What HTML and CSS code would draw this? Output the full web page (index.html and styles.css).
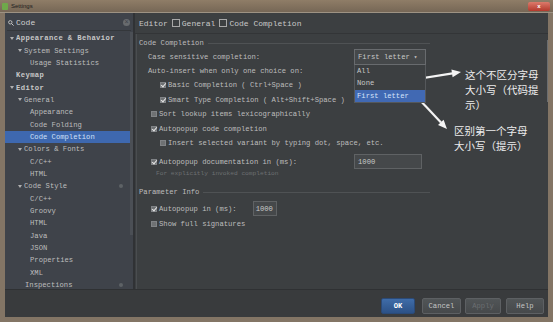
FILE: index.html
```html
<!DOCTYPE html>
<html lang="zh-cn">
<head>
<meta charset="UTF-8">
<title>Settings</title>
<link rel="stylesheet" href="styles.css">
</head>
<body>
<div class="window">
    <div class="titlebar">
        <span class="app-icon"></span>
        <span class="title">Settings</span>
        <span class="close">x</span>
    </div>

    <div class="dialog">
        <div class="main">
            <!-- arvore da esquerda -->
            <div class="sidebar">
                <div class="search">
                    <svg class="lupa" width="6" height="6" viewBox="0 0 6 6"><circle cx="2.3" cy="2.3" r="1.7" fill="none" stroke="#c8c8c8" stroke-width="0.9"/><line x1="3.5" y1="3.5" x2="5.6" y2="5.6" stroke="#c8c8c8" stroke-width="1"/></svg>
                    <span class="query">Code</span>
                    <span class="clear">×</span>
                </div>
                <ul class="tree">
                    <li class="l0 bold"><i class="arr"></i>Appearance &amp; Behavior</li>
                    <li class="l1"><i class="arr"></i>System Settings</li>
                    <li class="l2">Usage Statistics</li>
                    <li class="l0 leaf bold">Keymap</li>
                    <li class="l0 bold"><i class="arr"></i>Editor</li>
                    <li class="l1"><i class="arr"></i>General</li>
                    <li class="l2">Appearance</li>
                    <li class="l2">Code Folding</li>
                    <li class="l2 selected">Code Completion</li>
                    <li class="l1"><i class="arr"></i>Colors &amp; Fonts</li>
                    <li class="l2">C/C++</li>
                    <li class="l2">HTML</li>
                    <li class="l1"><i class="arr"></i>Code Style<span class="proj"></span></li>
                    <li class="l2">C/C++</li>
                    <li class="l2">Groovy</li>
                    <li class="l2">HTML</li>
                    <li class="l2">Java</li>
                    <li class="l2">JSON</li>
                    <li class="l2">Properties</li>
                    <li class="l2">XML</li>
                    <li class="l1 leaf">Inspections<span class="proj"></span></li>
                </ul>
                <div class="side-thumb"></div>
            </div>

            <!-- painel da direita -->
            <div class="content">
                <div class="crumbs">Editor<span class="box"></span>General<span class="box"></span>Code Completion</div>
                <div class="panel">
                    <div class="sec">Code Completion</div>

                    <div class="row grid">
                        <span class="lbl">Case sensitive completion:</span>
                        <div class="combo">First letter <span class="caret">▾</span>
                            <ul class="popup">
                                <li>All</li>
                                <li>None</li>
                                <li class="on">First letter</li>
                            </ul>
                        </div>
                    </div>
                    <div class="row"><span class="lbl">Auto-insert when only one choice on:</span></div>
                    <div class="row sub"><span class="cb checked"></span>Basic Completion ( Ctrl+Space )</div>
                    <div class="row sub"><span class="cb checked"></span>Smart Type Completion ( Alt+Shift+Space )</div>
                    <div class="row opt"><span class="cb"></span>Sort lookup items lexicographically</div>
                    <div class="row opt"><span class="cb checked"></span>Autopopup code completion</div>
                    <div class="row sub"><span class="cb"></span>Insert selected variant by typing dot, space, etc.</div>

                    <div class="row grid doc">
                        <span class="opt-in"><span class="cb checked"></span>Autopopup documentation in (ms):</span>
                        <span class="field wide">1000</span>
                    </div>
                    <div class="hint">For explicitly invoked completion</div>

                    <div class="sec param">Parameter Info</div>
                    <div class="row opt tall"><span class="cb checked"></span>Autopopup in (ms):<span class="field small">1000</span></div>
                    <div class="row opt"><span class="cb"></span>Show full signatures</div>
                </div>
                <div class="vscroll"></div>
            </div>
        </div>

        <div class="footer">
            <button class="btn ok">OK</button>
            <button class="btn cancel">Cancel</button>
            <button class="btn apply">Apply</button>
            <button class="btn help">Help</button>
        </div>
    </div>

    <!-- anotacoes por cima da tela -->
    <svg class="arrows" width="553" height="322" viewBox="0 0 553 322">
        <line x1="392" y1="83" x2="452.5" y2="73.4" stroke="#f4f4f4" stroke-width="2.2"/>
        <polygon points="461,72 452.6,77.2 451.4,69.6" fill="#f4f4f4"/>
        <line x1="417" y1="97" x2="441" y2="122.4" stroke="#f4f4f4" stroke-width="2.2"/>
        <polygon points="447,129 438,125 443.6,119.8" fill="#f4f4f4"/>
    </svg>
    <div class="note n1">这个不区分字母<br>大小写（代码提<br>示）</div>
    <div class="note n2">区别第一个字母<br>大小写（提示）</div>
</div>
</body>
</html>
```

FILE: styles.css
```css
/* base */
* {
    box-sizing: border-box;
    margin: 0;
    padding: 0;
}

body {
    width: 553px;
    height: 322px;
    overflow: hidden;
    background-color: #837565;
    font-family: "Liberation Mono", "DejaVu Sans Mono", monospace;
    font-size: 7.2px;
    color: #bdbdbd;
}

.window {
    height: 322px;
    display: flex;
    flex-direction: column;
    position: relative;
}

/* barra de titulo */
.titlebar {
    height: 13px;
    display: flex;
    align-items: center;
    padding: 0 3px 0 2px;
    background: linear-gradient(#8f7d67, #766756);
    border-bottom: 1px solid #9d9283;
}

.app-icon {
    width: 6px;
    height: 7px;
    background-color: #6fa84a;
    border-radius: 1px;
    margin-right: 3px;
}

.title {
    font-family: "Liberation Sans", sans-serif;
    font-size: 6px;
    color: #1d1d1d;
}

.close {
    margin-left: auto;
    width: 22px;
    height: 9px;
    line-height: 8px;
    text-align: center;
    font-family: "Liberation Sans", sans-serif;
    font-size: 6px;
    font-weight: bold;
    color: #fff;
    background: linear-gradient(#dc7a6b, #b3392c);
    border-radius: 2px;
}

/* dialogo */
.dialog {
    flex: 1;
    margin: 0 5px 5px 5px;
    display: flex;
    flex-direction: column;
    background-color: #3c3f41;
    min-height: 0;
}

.main {
    flex: 1;
    display: flex;
    min-height: 0;
}

/* arvore */
.sidebar {
    width: 130px;
    flex: none;
    background-color: #3f434a;
    border-right: 2px solid #303235;
    position: relative;
    overflow: hidden;
}

.search {
    height: 16px;
    margin: 2px 2px 0 2px;
    display: flex;
    align-items: center;
    padding-left: 1px;
    border-bottom: 1px solid #34373b;
}

.lupa {
    margin-right: 2px;
}

.query {
    font-size: 8px;
    color: #d0d0d0;
}

.clear {
    margin-left: auto;
    margin-right: 1px;
    width: 7px;
    height: 7px;
    border-radius: 50%;
    background-color: #686b6e;
    color: #3f434a;
    font-size: 7px;
    line-height: 7px;
    text-align: center;
}

.tree {
    list-style: none;
    padding-top: 1px;
}

.tree li {
    height: 12.35px;
    display: flex;
    align-items: center;
    white-space: nowrap;
}

.tree .bold {
    font-weight: bold;
    letter-spacing: 0.4px;
    color: #c8c8c8;
}

.tree .l0 { padding-left: 5px; }
.tree .l0.leaf { padding-left: 11px; }
.tree .l1 { padding-left: 13px; }
.tree .l1.leaf { padding-left: 20px; }
.tree .l2 { padding-left: 25px; }

.arr {
    width: 6px;
    height: 4px;
    flex: none;
    position: relative;
}

.arr::before {
    content: "";
    position: absolute;
    left: 0;
    top: 0.5px;
    border-left: 2.2px solid transparent;
    border-right: 2.2px solid transparent;
    border-top: 3px solid #b0b0b0;
}

.tree .selected {
    background-color: #3e68af;
    color: #cfe0f8;
}

.proj {
    margin-left: auto;
    margin-right: 10px;
    width: 4px;
    height: 4px;
    border-radius: 50%;
    background-color: #5e6266;
}

.side-thumb {
    position: absolute;
    right: 0;
    top: 19px;
    width: 3px;
    height: 203px;
    background-color: #4b4f55;
}

/* painel */
.content {
    flex: 1;
    display: flex;
    flex-direction: column;
    position: relative;
}

.crumbs {
    height: 21px;
    display: flex;
    align-items: center;
    padding-left: 4px;
    font-size: 8px;
    color: #c8c8c8;
    border-bottom: 1px solid #333537;
}

.box {
    width: 8px;
    height: 8px;
    margin: 0 2px 0 4px;
    border: 1px solid #a8a8a8;
}

.panel {
    flex: 1;
    margin-left: 1px;
    border-left: 1px solid #4a4d50;
    padding-top: 3px;
}

.sec {
    height: 12px;
    display: flex;
    align-items: center;
    padding-left: 2px;
    margin-right: 118px;
}

.sec::after {
    content: "";
    flex: 1;
    height: 1px;
    margin-left: 4px;
    background-color: #4f5254;
}

.sec.param {
    height: 14px;
    margin-top: 6px;
}

.row {
    height: 14.5px;
    display: flex;
    align-items: center;
    white-space: nowrap;
}

.row.grid {
    display: grid;
    grid-template-columns: 217px auto;
    justify-items: start;
}

.row.tall {
    height: 15px;
    margin-top: 2px;
    margin-bottom: 1px;
}

.lbl { padding-left: 11px; }
.opt { padding-left: 14px; }
.sub { padding-left: 23px; }

.opt-in {
    padding-left: 14px;
    display: flex;
    align-items: center;
}

.doc {
    height: 15px;
    margin-top: 3.5px;
}

.hint {
    height: 10px;
    line-height: 10px;
    padding-left: 19px;
    font-size: 6.2px;
    color: #6d7072;
}

/* checkbox */
.cb {
    width: 6px;
    height: 6px;
    margin-right: 2px;
    flex: none;
    background-color: #6e7173;
    border: 1px solid #808386;
    position: relative;
}

.cb.checked::after {
    content: "";
    position: absolute;
    left: 0.5px;
    top: -1px;
    width: 2px;
    height: 4px;
    border-right: 1.3px solid #e6e6e6;
    border-bottom: 1.3px solid #e6e6e6;
    transform: rotate(40deg);
}

/* combo e campos */
.combo {
    width: 72px;
    height: 16px;
    display: flex;
    align-items: center;
    padding-left: 3px;
    background-color: #45484a;
    border: 1px solid #686b6e;
    color: #c8c8c8;
    position: relative;
}

.caret {
    margin-left: 4px;
    font-size: 6px;
}

.popup {
    list-style: none;
    position: absolute;
    left: -1px;
    top: 15px;
    width: 72px;
    background-color: #3c3f41;
    border: 1px solid #55585b;
    border-top: none;
    z-index: 2;
}

.popup li {
    height: 12.4px;
    line-height: 12.4px;
    padding-left: 2px;
}

.popup li.on {
    background-color: #4169b3;
    color: #d6e4fb;
}

.field {
    height: 15px;
    display: flex;
    align-items: center;
    padding-left: 3px;
    background-color: #45484a;
    border: 1px solid #5f6264;
    color: #c8c8c8;
}

.field.wide { width: 68px; }

.field.small {
    width: 24px;
    margin-left: 16px;
    padding-left: 2px;
}

.vscroll {
    position: absolute;
    right: 0;
    top: 27px;
    width: 1px;
    height: 62px;
    background-color: #6a6d70;
}

/* rodape */
.footer {
    height: 28px;
    flex: none;
    display: flex;
    justify-content: flex-end;
    align-items: flex-start;
    padding: 8px 4px 0 0;
    background-color: #393b3d;
    border-top: 1px solid #2f3133;
}

.btn {
    height: 16px;
    font-family: "Liberation Mono", "DejaVu Sans Mono", monospace;
    font-size: 7.2px;
    color: #c4c4c4;
    background: linear-gradient(#515557, #46494b);
    border: 1px solid #5d6063;
    border-radius: 2px;
}

.btn.ok {
    width: 34px;
    color: #ffffff;
    font-weight: bold;
    background: linear-gradient(#3f6ca8, #2c5186);
    border-color: #2b4a77;
}

.btn.cancel { width: 39px; margin-left: 7px; }
.btn.apply { width: 36px; margin-left: 4px; color: #6b6e71; }
.btn.help { width: 38px; margin-left: 5px; }

/* anotacoes */
.arrows {
    position: absolute;
    left: 0;
    top: 0;
    pointer-events: none;
}

.note {
    position: absolute;
    font-family: "Noto Sans CJK SC", sans-serif;
    font-size: 10.5px;
    line-height: 15px;
    color: #ededed;
    white-space: nowrap;
}

.n1 { left: 465px; top: 67px; }
.n2 { left: 454px; top: 123px; }
```
